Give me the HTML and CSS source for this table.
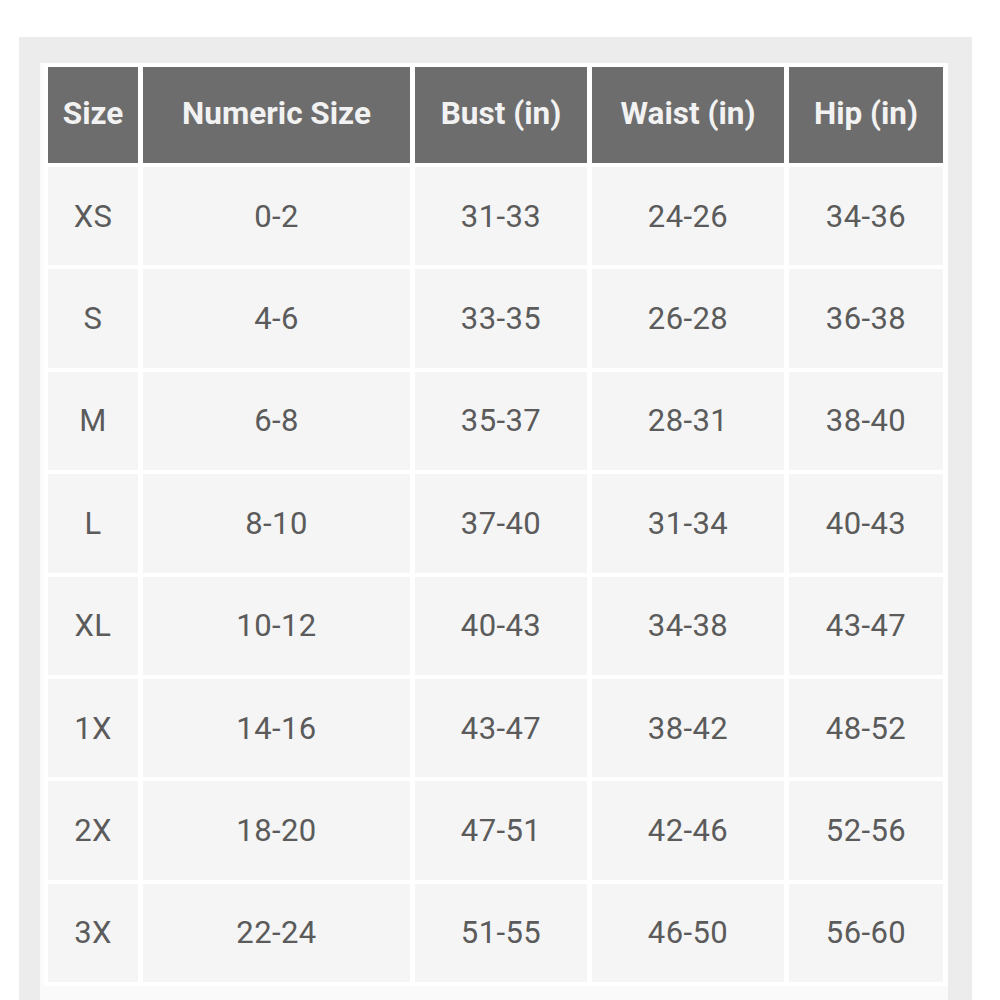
FILE: index.html
```html
<!DOCTYPE html>
<html>
<head>
<meta charset="utf-8">
<link rel="stylesheet" href="styles.css">
</head>
<body>
<div class="panel">
  <div class="sheet">
    <table class="chart">
      <thead>
        <tr>
          <th class="c1">Size</th>
          <th class="c2">Numeric Size</th>
          <th class="c3">Bust (in)</th>
          <th class="c4">Waist (in)</th>
          <th class="c5">Hip (in)</th>
        </tr>
      </thead>
      <tbody>
        <tr><td>XS</td><td>0-2</td><td>31-33</td><td>24-26</td><td>34-36</td></tr>
        <tr><td>S</td><td>4-6</td><td>33-35</td><td>26-28</td><td>36-38</td></tr>
        <tr><td>M</td><td>6-8</td><td>35-37</td><td>28-31</td><td>38-40</td></tr>
        <tr><td>L</td><td>8-10</td><td>37-40</td><td>31-34</td><td>40-43</td></tr>
        <tr><td>XL</td><td>10-12</td><td>40-43</td><td>34-38</td><td>43-47</td></tr>
        <tr><td>1X</td><td>14-16</td><td>43-47</td><td>38-42</td><td>48-52</td></tr>
        <tr><td>2X</td><td>18-20</td><td>47-51</td><td>42-46</td><td>52-56</td></tr>
        <tr><td>3X</td><td>22-24</td><td>51-55</td><td>46-50</td><td>56-60</td></tr>
      </tbody>
    </table>
  </div>
</div>
</body>
</html>
```
FILE: styles.css
```css
html, body {
  margin: 0;
  padding: 0;
  background: #ffffff;
  height: 1000px;
  overflow: hidden;
}
body {
  font-family: Roboto, "Liberation Sans", sans-serif;
}
.panel {
  margin: 37px 0 0 19px;
  width: 953px;
  height: 963px;
  background: #ececec;
  padding: 26px 24px 0 21px;
  box-sizing: border-box;
  overflow: hidden;
}
.sheet {
  background: #fafafa;
  padding: 0 0 0 3px;
  width: 908px;
  height: 937px;
  box-sizing: border-box;
  overflow: hidden;
}
.chart {
  border-collapse: separate;
  border-spacing: 5px 4.6px;
  background: #ffffff;
  margin: 0;
  table-layout: fixed;
  width: 905px;
}
.chart th {
  background: #6d6d6d;
  color: #f2f2f2;
  font-weight: 700;
  font-size: 31.5px;
  height: 93px;
  padding: 0 0 3px 0;
  text-align: center;
  vertical-align: middle;
}
.chart td {
  background: #f5f5f5;
  color: #5b5b5b;
  font-size: 31px;
  letter-spacing: 0.4px;
  font-weight: 400;
  height: 98.4px;
  padding: 0;
  text-align: center;
  vertical-align: middle;
}
.c1 { width: 90px; }
.c2 { width: 267px; }
.c3 { width: 172px; }
.c4 { width: 192px; }
.c5 { width: 154px; }
```
